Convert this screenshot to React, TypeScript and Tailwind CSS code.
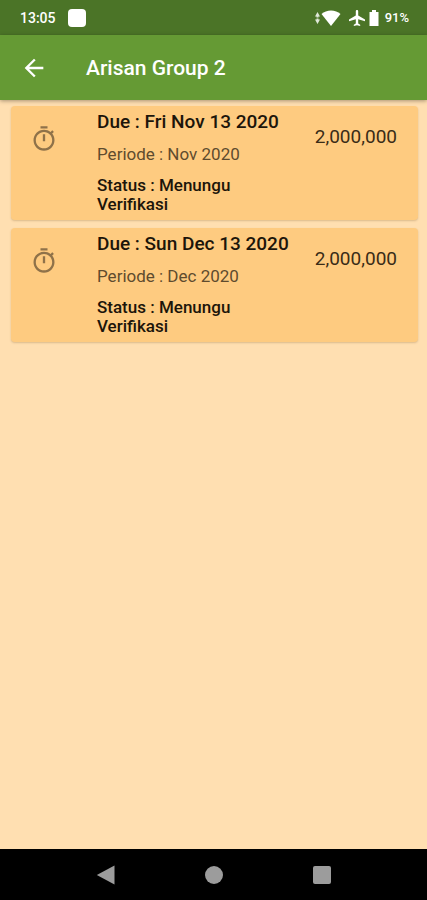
import React from "react";

type Payment = {
  id: number;
  due: string;
  period: string;
  status: string;
  amount: string;
};

const payments: Payment[] = [
  { id: 1, due: "Fri Nov 13 2020", period: "Nov 2020", status: "Menungu Verifikasi", amount: "2,000,000" },
  { id: 2, due: "Sun Dec 13 2020", period: "Dec 2020", status: "Menungu Verifikasi", amount: "2,000,000" },
];

function TimerIcon() {
  return (
    <svg viewBox="0 0 24 24" className="size-7 fill-[#8f7249]" aria-hidden="true">
      <path d="M15 1H9v2h6V1zm-4 13h2V8h-2v6zm8.03-6.61 1.42-1.42c-.43-.51-.9-.99-1.41-1.41l-1.42 1.42C16.07 4.74 14.12 4 12 4c-4.97 0-9 4.03-9 9s4.02 9 9 9 9-4.03 9-9c0-2.12-.74-4.07-1.97-5.61zM12 20c-3.87 0-7-3.13-7-7s3.13-7 7-7 7 3.13 7 7-3.13 7-7 7z" />
    </svg>
  );
}

function StatusBar() {
  return (
    <div className="flex h-[35px] items-center bg-[#4b7427] pr-[18px] pl-5 text-white">
      <span className="text-sm font-medium">13:05</span>
      <span className="ml-3 size-[18px] rounded bg-white" />
      <div className="ml-auto flex items-center">
        <svg viewBox="0 0 5 12" className="h-3 w-[5px] fill-[#dfe8d8]" aria-hidden="true">
          <path d="M2.5 0 5 4.5H3.5v1h-2v-1H0zM2.5 12 0 7.5h1.5v-1h2v1H5z" />
        </svg>
        <svg viewBox="0 0 20 16" className="ml-px h-4 w-5 fill-white" aria-hidden="true">
          <path d="M10 16 .5 4C3 1.8 6.4.6 10 .6S17 1.8 19.5 4z" />
        </svg>
        <svg viewBox="2 2 20 20" className="ml-2 size-4 fill-white" aria-hidden="true">
          <path d="M22 16v-2l-8.5-5V3.5c0-.83-.67-1.5-1.5-1.5s-1.5.67-1.5 1.5V9L2 14v2l8.5-2.500V19L8 20.5V22l4-1 4 1v-1.5L13.5 19v-5.5L22 16z" />
        </svg>
        <svg viewBox="0 0 10 16" className="ml-1 h-4 w-2.5 fill-white" aria-hidden="true">
          <path d="M3 0h4v2h2.500v14H.5V2H3z" />
        </svg>
        <span className="ml-1.5 text-[13px] font-medium">91%</span>
      </div>
    </div>
  );
}

function PaymentCard({ payment }: { payment: Payment }) {
  return (
    <li className="flex items-start rounded bg-[#fecb80] pt-1 pr-[21px] pb-1.5 pl-[19px] shadow-[0_1px_2px_rgba(110,80,30,0.25)]">
      <div className="mt-[15px] w-[67px] shrink-0">
        <TimerIcon />
      </div>
      <div className="min-w-0 flex-1">
        <h2 className="text-[19px] leading-6 font-medium whitespace-nowrap text-[#1c150a]">{`Due : ${payment.due}`}</h2>
        <p className="mt-2 text-[17px] leading-6 text-[#5f4b2e]">{`Periode : ${payment.period}`}</p>
        <p className="mt-2.5 w-36 text-[17px] leading-[19px] font-medium text-[#1c150a]">{`Status : ${payment.status}`}</p>
      </div>
      <p className="mt-[15px] text-[19px] leading-6 text-[#3a2c17]">{payment.amount}</p>
    </li>
  );
}

export default function App() {
  return (
    <div className="flex min-h-screen flex-col bg-[#ffdfb1] font-[Roboto,sans-serif]">
      <StatusBar />
      <header className="flex h-[65px] items-center bg-[#659a34] px-5 text-white shadow-[0_1px_4px_rgba(0,0,0,0.35)]">
        <button type="button" aria-label="Back" className="flex size-7 items-center justify-center">
          <svg viewBox="0 0 24 24" className="size-7 fill-white" aria-hidden="true">
            <path d="M20 11H7.83l5.59-5.59L12 4l-8 8 8 8 1.41-1.41L7.83 13H20v-2z" />
          </svg>
        </button>
        <h1 className="ml-[38px] pt-0.5 text-[21px] font-medium">Arisan Group 2</h1>
      </header>
      <main className="flex-1 pt-1.5 pr-[9px] pl-[11px]">
        <ul className="flex flex-col gap-2">
          {payments.map((payment) => (
            <PaymentCard key={payment.id} payment={payment} />
          ))}
        </ul>
      </main>
      <nav className="flex h-[51px] items-center justify-center gap-[88px] bg-black">
        <button type="button" aria-label="Back" className="flex size-5 items-center justify-center">
          <svg viewBox="0 0 20 20" className="size-5 fill-[#9c9c9c]" aria-hidden="true">
            <path d="M18.5.5v19L.8 10z" />
          </svg>
        </button>
        <button type="button" aria-label="Home" className="flex size-5 items-center justify-center">
          <span className="size-[18px] rounded-full bg-[#9c9c9c]" />
        </button>
        <button type="button" aria-label="Recent apps" className="flex size-5 items-center justify-center">
          <span className="size-[18px] rounded-xs bg-[#9c9c9c]" />
        </button>
      </nav>
    </div>
  );
}
